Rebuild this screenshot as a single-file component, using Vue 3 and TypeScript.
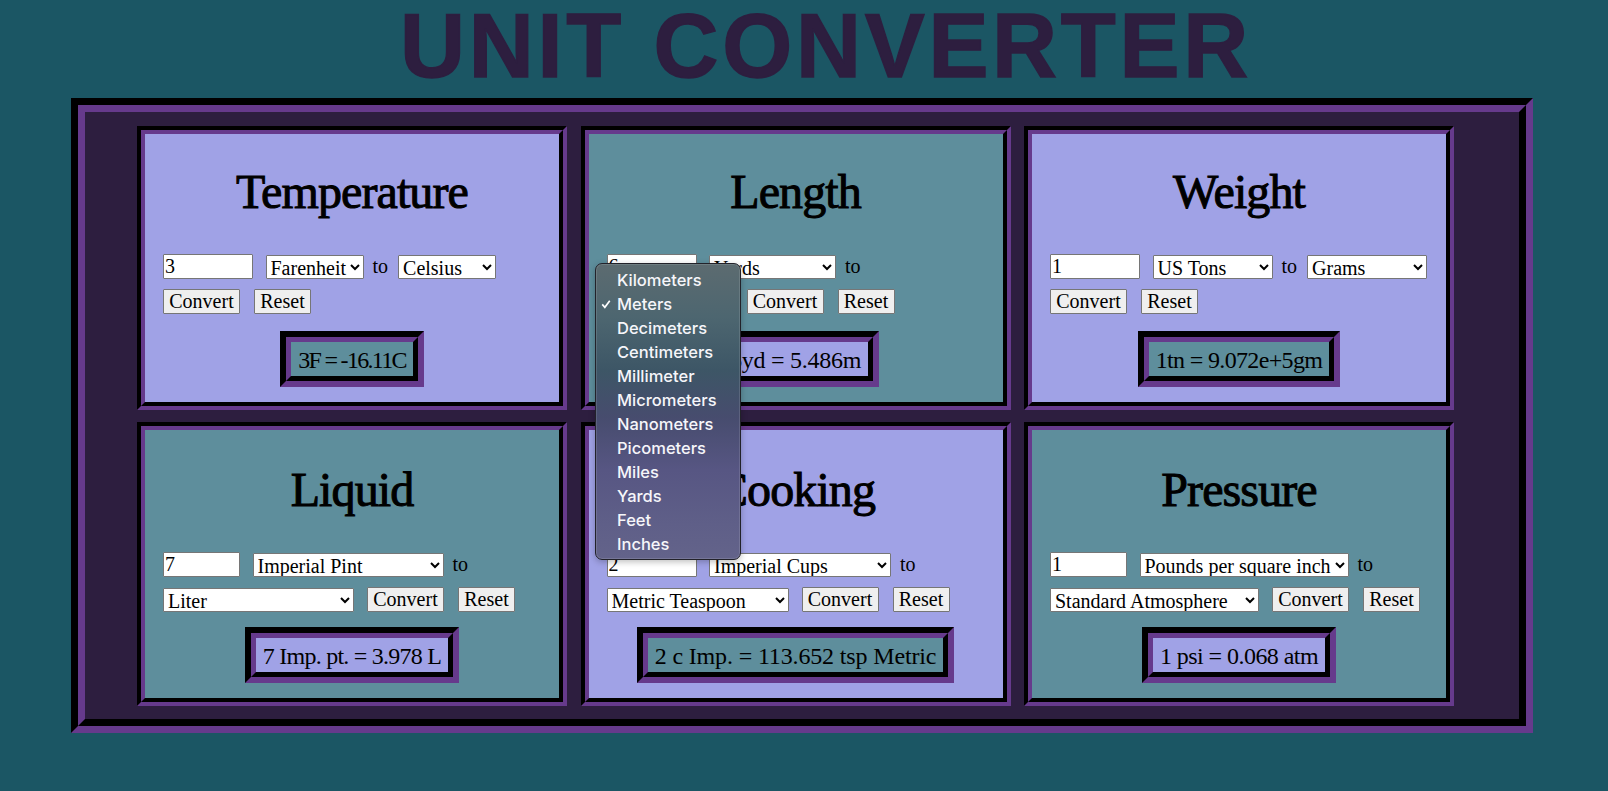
<script setup lang="ts">
interface Converter {
  title: string;
  value: string;
  inputWidth: number;
  selectWidth: number;
  from: string;
  to: string;
  result: string;
  // the result font is narrower or wider than the one we have, depending on the digits
  track: number;
  tone: 'lav' | 'teal';
}

const converters: Converter[] = [
  { title: 'Temperature', value: '3', inputWidth: 90, selectWidth: 98, from: 'Farenheit', to: 'Celsius', result: '3F = -16.11C', track: -1.7, tone: 'lav' },
  { title: 'Length', value: '6', inputWidth: 90, selectWidth: 127, from: 'Yards', to: 'Meters', result: '6yd = 5.486m', track: -0.25, tone: 'teal' },
  { title: 'Weight', value: '1', inputWidth: 90, selectWidth: 120, from: 'US Tons', to: 'Grams', result: '1tn = 9.072e+5gm', track: -0.65, tone: 'lav' },
  { title: 'Liquid', value: '7', inputWidth: 77, selectWidth: 191, from: 'Imperial Pint', to: 'Liter', result: '7 Imp. pt. = 3.978 L', track: -0.75, tone: 'teal' },
  { title: 'Cooking', value: '2', inputWidth: 90, selectWidth: 182, from: 'Imperial Cups', to: 'Metric Teaspoon', result: '2 c Imp. = 113.652 tsp Metric', track: -0.15, tone: 'lav' },
  { title: 'Pressure', value: '1', inputWidth: 77, selectWidth: 209, from: 'Pounds per square inch', to: 'Standard Atmosphere', result: '1 psi = 0.068 atm', track: -0.55, tone: 'teal' },
];

const lengthUnits = [
  'Kilometers', 'Meters', 'Decimeters', 'Centimeters', 'Millimeter', 'Micrometers',
  'Nanometers', 'Picometers', 'Miles', 'Yards', 'Feet', 'Inches',
];
</script>

<template>
  <div class="page">
    <h1 class="title">UNIT CONVERTER</h1>

    <div class="board">
      <div class="board-in">
        <div v-for="c in converters" :key="c.title" class="card">
          <div :class="['card-in', c.tone]">
            <h2>{{ c.title }}</h2>
            <form class="form" @submit.prevent>
              <input type="text" :value="c.value" :style="{ width: c.inputWidth + 'px' }" />
              <select :style="{ width: c.selectWidth + 'px' }">
                <option>{{ c.from }}</option>
              </select>
              <span class="to">to</span>
              <select :style="{ width: c.selectWidth + 'px' }">
                <option>{{ c.to }}</option>
              </select>
              <button type="button">Convert</button>
              <button type="button">Reset</button>
            </form>
            <div class="result">
              <div class="result-mid">
                <p :style="{ letterSpacing: c.track + 'px' }">{{ c.result }}</p>
              </div>
            </div>
          </div>
        </div>
      </div>
    </div>

    <ul class="menu">
      <li v-for="unit in lengthUnits" :key="unit">
        <svg v-if="unit === 'Meters'" class="check" viewBox="0 0 12 12">
          <path d="M1.5 6.5 L4.6 10 L10.5 2" fill="none" stroke="#fff" stroke-width="2" />
        </svg>
        {{ unit }}
      </li>
    </ul>
  </div>
</template>

<style scoped>
.page {
  position: relative;
  min-height: 791px;
}

.title {
  margin: 0 0 6px;
  padding-left: 44px;
  text-align: center;
  font-family: "Liberation Sans", Arial, sans-serif;
  font-size: 90px;
  font-weight: 700;
  line-height: 92px;
  letter-spacing: 3.7px;
  color: #2d1e3f;
  -webkit-text-stroke: 1.4px #2d1e3f;
}

.board {
  box-sizing: border-box;
  width: 1462px;
  margin-left: 71px;
  border: 7px solid;
  border-color: #000 #663a8c #663a8c #000;
}

.board-in {
  display: grid;
  grid-template-columns: repeat(3, 430px);
  grid-auto-rows: 284px;
  column-gap: 13.5px;
  row-gap: 12px;
  padding: 14px 65px 13px 52px;
  background: #2d1e3f;
  border: 7px solid;
  border-color: #663a8c #000 #000 #663a8c;
}

.card {
  box-sizing: border-box;
  border: 4px solid;
  border-color: #000 #663a8c #663a8c #000;
}

.card-in {
  box-sizing: border-box;
  height: 100%;
  display: flex;
  flex-direction: column;
  padding: 30px 14px 0 18px;
  border: 4px solid;
  border-color: #663a8c #000 #000 #663a8c;
  color: #000;
  font-family: "Liberation Serif", "Times New Roman", serif;
}

.lav {
  background: #a0a2e6;
}

.teal {
  background: #5e8e9c;
}

h2 {
  margin: 0 0 0 -4px;
  text-align: center;
  font-size: 48px;
  font-weight: 400;
  line-height: 56px;
  letter-spacing: -0.9px;
  -webkit-text-stroke: 1px #000;
}

.form {
  display: flex;
  flex-wrap: wrap;
  align-items: center;
  column-gap: 13px;
  row-gap: 10px;
  margin-top: 34px;
  font-size: 20px;
  line-height: 25px;
}

.to {
  margin: 0 -3px 0 -4px;
}

input,
select,
button {
  box-sizing: border-box;
  margin: 0;
  font-family: inherit;
  font-size: 20px;
  color: #000;
  border: 1px solid #767676;
  border-radius: 1px;
}

input {
  height: 25px;
  margin-right: -0.5px;
  padding: 0 1px;
  background: #fff;
}

select {
  height: 24px;
  padding: 0;
  background-color: #fff;
}

button {
  width: 77px;
  height: 25px;
  padding: 0;
  background: #efefef;
  line-height: 23px;
}

button:last-child {
  width: 57px;
  margin-left: 1px;
}

.result {
  align-self: center;
  margin: 17px 0 0 -4px;
  border: 6px solid;
  border-color: #000 #663a8c #663a8c #000;
}

.result-mid {
  border: 5px solid;
  border-color: #663a8c #000 #000 #663a8c;
}

.result p {
  margin: 0;
  padding: 3px 7px 0;
  font-size: 24px;
  line-height: 31px;
  white-space: nowrap;
}

.lav .result p {
  background: #5e8e9c;
}

.teal .result p {
  background: #a0a2e6;
}

.card:nth-child(n + 4) .card-in {
  padding-top: 32px;
}

.card:nth-child(n + 4) .result {
  margin-top: 15px;
}

.menu {
  position: absolute;
  left: 595px;
  top: 263px;
  z-index: 10;
  box-sizing: border-box;
  width: 146px;
  height: 297px;
  margin: 0;
  padding: 4px 0;
  list-style: none;
  border: 1px solid #22222a;
  border-radius: 7px;
  background: linear-gradient(180deg, #5c6b70 0%, #4d6670 18%, #3d5666 36%, #474c6e 52%, #575683 70%, #5f5f88 88%, #63638a 100%);
  box-shadow: 0 2px 6px rgba(0, 0, 0, 0.25), inset 0 0 0 1px rgba(255, 255, 255, 0.12);
  color: #f6f6fa;
  font-family: Inter, "Liberation Sans", sans-serif;
  font-size: 16.5px;
  font-weight: 500;
  line-height: 24px;
}

.menu li {
  position: relative;
  padding-left: 21px;
  white-space: nowrap;
}

.check {
  position: absolute;
  left: 5px;
  top: 7px;
  width: 10px;
  height: 10px;
}
</style>

<style>
html,
body {
  margin: 0;
  background: #1b5664;
}
</style>
